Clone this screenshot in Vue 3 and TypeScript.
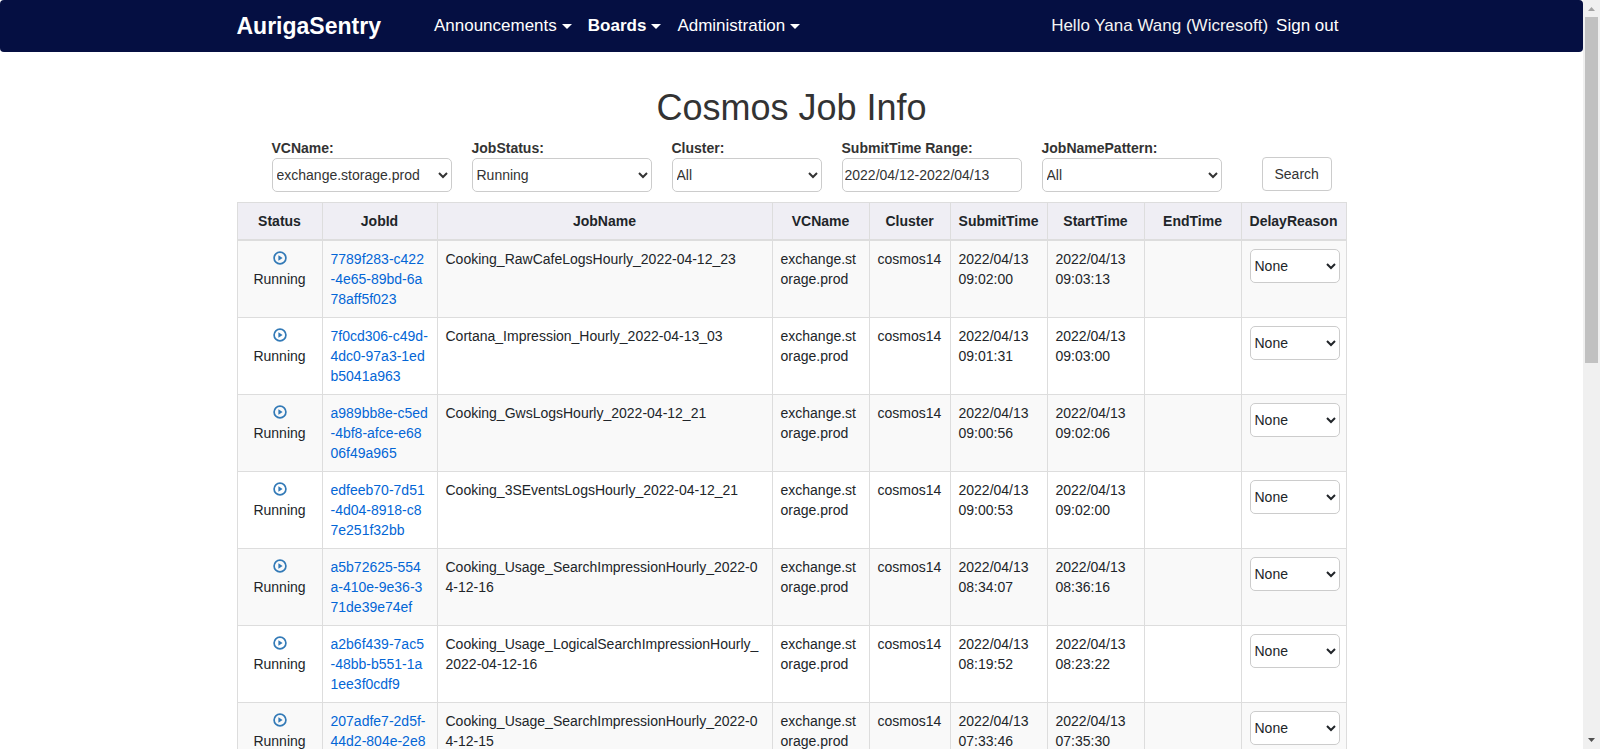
<script setup lang="ts">
import { ref } from 'vue'

interface Job {
  id: string
  name: string
  submit: [string, string]
  start: [string, string]
  reason: string
}

const menus = [
  { label: 'Announcements', active: false },
  { label: 'Boards', active: true },
  { label: 'Administration', active: false },
]

const columns = [
  { label: 'Status', cls: 'c-status' },
  { label: 'JobId', cls: 'c-id' },
  { label: 'JobName', cls: 'c-name' },
  { label: 'VCName', cls: 'c-time' },
  { label: 'Cluster', cls: 'c-cluster' },
  { label: 'SubmitTime', cls: 'c-time' },
  { label: 'StartTime', cls: 'c-time' },
  { label: 'EndTime', cls: 'c-time' },
  { label: 'DelayReason', cls: 'c-reason' },
]

const vcName = ref('exchange.storage.prod')
const jobStatus = ref('Running')
const cluster = ref('All')
const range = ref('2022/04/12-2022/04/13')
const pattern = ref('All')

const day = '2022/04/13'
const jobs = ref<Job[]>([
  { id: '7789f283-c422-4e65-89bd-6a78aff5f023', name: 'Cooking_RawCafeLogsHourly_2022-04-12_23', submit: [day, '09:02:00'], start: [day, '09:03:13'], reason: 'None' },
  { id: '7f0cd306-c49d-4dc0-97a3-1edb5041a963', name: 'Cortana_Impression_Hourly_2022-04-13_03', submit: [day, '09:01:31'], start: [day, '09:03:00'], reason: 'None' },
  { id: 'a989bb8e-c5ed-4bf8-afce-e6806f49a965', name: 'Cooking_GwsLogsHourly_2022-04-12_21', submit: [day, '09:00:56'], start: [day, '09:02:06'], reason: 'None' },
  { id: 'edfeeb70-7d51-4d04-8918-c87e251f32bb', name: 'Cooking_3SEventsLogsHourly_2022-04-12_21', submit: [day, '09:00:53'], start: [day, '09:02:00'], reason: 'None' },
  { id: 'a5b72625-554a-410e-9e36-371de39e74ef', name: 'Cooking_Usage_SearchImpressionHourly_2022-04-12-16', submit: [day, '08:34:07'], start: [day, '08:36:16'], reason: 'None' },
  { id: 'a2b6f439-7ac5-48bb-b551-1a1ee3f0cdf9', name: 'Cooking_Usage_LogicalSearchImpressionHourly_2022-04-12-16', submit: [day, '08:19:52'], start: [day, '08:23:22'], reason: 'None' },
  { id: '207adfe7-2d5f-44d2-804e-2e8', name: 'Cooking_Usage_SearchImpressionHourly_2022-04-12-15', submit: [day, '07:33:46'], start: [day, '07:35:30'], reason: 'None' },
])
</script>

<template>
  <div class="shell">
    <div class="page">
      <header class="navbar">
        <div class="container nav-inner">
          <a class="brand" href="#">AurigaSentry</a>
          <nav class="menu">
            <a v-for="m in menus" :key="m.label" href="#" class="nav-link" :class="{ active: m.active }">{{ m.label }}<span class="caret"></span></a>
          </nav>
          <div class="account">
            <span>Hello Yana Wang (Wicresoft)</span>
            <a href="#" class="sign-out">Sign out</a>
          </div>
        </div>
      </header>

      <main class="container">
        <h1>Cosmos Job Info</h1>

        <form class="filters" @submit.prevent>
          <div class="field">
            <label for="vc">VCName:</label>
            <select id="vc" v-model="vcName" class="control"><option>exchange.storage.prod</option></select>
          </div>
          <div class="field">
            <label for="status">JobStatus:</label>
            <select id="status" v-model="jobStatus" class="control"><option>Running</option></select>
          </div>
          <div class="field narrow">
            <label for="cluster">Cluster:</label>
            <select id="cluster" v-model="cluster" class="control"><option>All</option></select>
          </div>
          <div class="field">
            <label for="range">SubmitTime Range:</label>
            <input id="range" v-model="range" type="text" class="control">
          </div>
          <div class="field">
            <label for="pattern">JobNamePattern:</label>
            <select id="pattern" v-model="pattern" class="control"><option>All</option></select>
          </div>
          <button type="submit" class="search">Search</button>
        </form>

        <table>
          <colgroup>
            <col v-for="c in columns" :key="c.label" :class="c.cls">
          </colgroup>
          <thead>
            <tr>
              <th v-for="c in columns" :key="c.label" scope="col">{{ c.label }}</th>
            </tr>
          </thead>
          <tbody>
            <tr v-for="job in jobs" :key="job.id">
              <td class="status">
                <svg class="play" viewBox="0 0 14 14" aria-hidden="true">
                  <circle cx="7" cy="7" r="5.9" fill="none" stroke="#337ab7" stroke-width="1.7" />
                  <path d="M5.400 4.300v5.400L9.600 7z" fill="#337ab7" />
                </svg>
                <span>Running</span>
              </td>
              <td><a href="#" class="job-link">{{ job.id }}</a></td>
              <td>{{ job.name }}</td>
              <td>exchange.storage.prod</td>
              <td class="cluster">cosmos14</td>
              <td>{{ job.submit[0] }}<br>{{ job.submit[1] }}</td>
              <td>{{ job.start[0] }}<br>{{ job.start[1] }}</td>
              <td></td>
              <td>
                <select v-model="job.reason" class="control reason" :aria-label="'Delay reason for ' + job.name"><option>None</option></select>
              </td>
            </tr>
          </tbody>
        </table>
      </main>
    </div>

    <div class="scrollbar" aria-hidden="true">
      <svg class="arrow" viewBox="0 0 17 17"><path d="M5 11h7L8.500 7z" fill="#a3a3a3" /></svg>
      <div class="track"><div class="thumb"></div></div>
      <svg class="arrow" viewBox="0 0 17 17"><path d="M5 6h7L8.500 10z" fill="#505050" /></svg>
    </div>
  </div>
</template>

<style>
body {
  background: #fff;
}
</style>

<style scoped>
.shell {
  display: flex;
  height: 100vh;
  overflow: hidden;
  font-family: "Liberation Sans", Arial, sans-serif;
  font-size: 14px;
  line-height: 20px;
  color: #212529;
}
.shell *,
.shell {
  box-sizing: border-box;
}
.page {
  flex: 1;
  min-width: 0;
  overflow-y: auto;
  scrollbar-width: none;
}
.container {
  max-width: 1140px;
  margin: 0 auto;
  padding: 0 15px;
}
.navbar {
  background: #050f42;
  border-radius: 4px;
}
.nav-inner {
  display: flex;
  align-items: center;
  height: 52px;
  font-size: 17px;
}
.nav-inner a {
  color: #fff;
  text-decoration: none;
}
.nav-inner .brand {
  font-size: 23px;
  line-height: 32px;
  font-weight: bold;
  margin-right: 45px;
}
.menu {
  display: flex;
}
.nav-link {
  display: flex;
  align-items: center;
  padding: 0 8px;
}
.nav-link.active {
  font-weight: bold;
}
.caret {
  margin-left: 5px;
  border: 5px solid transparent;
  border-top-color: #fff;
  border-bottom: 0;
}
.account {
  display: flex;
  gap: 8px;
  margin-left: auto;
  padding-right: 8px;
  color: #f4f4f4;
}
h1 {
  margin: 36px 0 10px;
  font-size: 36px;
  line-height: 40px;
  font-weight: 400;
  text-align: center;
  color: #333;
}
.filters {
  display: flex;
  align-items: flex-end;
  gap: 20px;
  padding-left: 35px;
  margin-bottom: 10px;
  color: #333;
}
.field {
  width: 180px;
}
.field.narrow {
  width: 150px;
}
.field label {
  display: block;
  font-weight: bold;
}
.control {
  display: block;
  width: 100%;
  height: 34px;
  margin: 0;
  border: 1px solid #ccc;
  border-radius: 5px;
  background-color: #fff;
  color: #333;
  font: inherit;
}
input.control {
  padding: 0 2px;
}
.search {
  height: 34px;
  margin: 0 0 1px 20px;
  padding: 0 12px;
  border: 1px solid #ccc;
  border-radius: 4px;
  background: #fff;
  color: #333;
  font: inherit;
}
table {
  width: 100%;
  table-layout: fixed;
  border-collapse: collapse;
}
.c-status { width: 85px; }
.c-id { width: 115px; }
.c-time { width: 97px; }
.c-cluster { width: 81px; }
.c-reason { width: 105px; }
th,
td {
  padding: 8px;
  border: 1px solid #ddd;
  vertical-align: top;
  word-break: break-all;
}
th {
  background: #efeef4;
  border-bottom-width: 2px;
  text-align: center;
  word-break: normal;
  white-space: nowrap;
}
tbody tr:nth-child(odd) {
  background: #f9f9f9;
}
.status {
  text-align: center;
}
.cluster {
  white-space: nowrap;
}
.play {
  display: block;
  width: 14px;
  height: 14px;
  margin: 2px auto 4px;
}
.job-link {
  color: #0366d6;
  text-decoration: none;
}
.reason {
  width: 90px;
  color: #212529;
}
.scrollbar {
  display: flex;
  flex-direction: column;
  width: 17px;
  background: #f0f0f0;
}
.arrow {
  display: block;
  width: 17px;
  height: 17px;
}
.track {
  flex: 1;
  padding: 0 2px;
}
.thumb {
  height: 48.4%;
  background: #c1c1c1;
}
</style>
